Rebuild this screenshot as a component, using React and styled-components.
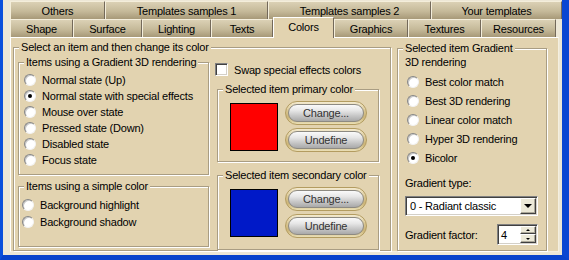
import React from 'react'
import styled, { createGlobalStyle } from 'styled-components'

const BEIGE = '#e2d3b0'

const GlobalStyle = createGlobalStyle`
  body {
    margin: 0;
    font-family: 'Liberation Sans', Arial, sans-serif;
    font-size: 11px;
    color: #000;
  }
`

const Window = styled.div`
  box-sizing: border-box;
  width: 569px;
  height: 260px;
  padding: 1px 0 0 7px;
  background: #ede7d6;
  border-left: 3px solid #0b50dc;
  border-right: 7px solid #0a46d2;
  border-bottom: 5px solid #0843cc;

  display: flex;
  flex-direction: column;
  letter-spacing: -0.2px;
`

const TabRow = styled.div`
  display: flex;
  align-items: flex-start;
  height: 18px;
`

const Tab = styled.div`
  box-sizing: border-box;
  width: ${p => p.$w}px;
  height: ${p => (p.$active ? 21 : 18)}px;
  margin-top: ${p => (p.$active ? -2 : 0)}px;
  padding-top: 2px;
  position: relative;
  z-index: ${p => (p.$active ? 1 : 0)};

  border-top: 1px solid ${p => (p.$active ? '#fff' : '#f4eedb')};
  border-left: 1px solid ${p => (p.$active ? '#fff' : '#f4eedb')};
  border-right: 1px solid #73695a;
  background: ${p =>
    p.$active ? BEIGE : 'linear-gradient(#dbd1b5, #c5b999 55%, #a79978)'};

  text-align: center;
  line-height: 14px;
  white-space: nowrap;
`

const Panel = styled.div`
  flex: 1;
  margin: 0 3px 3px 0;
  padding: 3px 0 0 2px;
  background: ${BEIGE};
  border: 1px solid #fff;
  border-right-color: #f4efe0;
  border-bottom-color: #f4efe0;

  display: flex;
  align-items: flex-start;
`

const Group = styled.fieldset`
  box-sizing: border-box;
  width: ${p => p.$w}px;
  height: ${p => p.$h}px;
  margin: ${p => p.$mt || 0}px 0 0 ${p => p.$ml || 0}px;
  padding: 0;
  min-width: 0;
  border: 1px solid #a99d83;
  box-shadow: 1px 1px 0 #fff, inset 1px 1px 0 #fff;
`

const Legend = styled.legend`
  margin-left: 5px;
  padding: 0 2px;
  line-height: 13px;
  background: ${BEIGE};
`

const SplitBody = styled.div`
  display: flex;
  padding: 2px 0 0 4px;
`

const Column = styled.div`
  display: flex;
  flex-direction: column;
  margin-left: ${p => p.$ml || 0}px;
`

const RadioList = styled.div`
  display: flex;
  flex-direction: column;
  padding: 3px 0 0 ${p => p.$pl}px;
`

const Row = styled.label`
  display: flex;
  align-items: center;
  gap: 6px;
  height: ${p => p.$h}px;
  white-space: nowrap;
`

const RadioDot = styled.span`
  box-sizing: border-box;
  width: 12px;
  height: 12px;
  border-radius: 50%;
  background: #fff;
  border: 1px solid;
  border-color: #858585 #f2f2f2 #f2f2f2 #858585;
  box-shadow: inset 1px 1px 0 #c8c8c8;

  display: flex;
  align-items: center;
  justify-content: center;

  &::after {
    content: '';
    width: 4px;
    height: 4px;
    border-radius: 50%;
    background: #000;
    display: ${p => (p.$on ? 'block' : 'none')};
  }
`

const CheckBox = styled.span`
  box-sizing: border-box;
  width: 13px;
  height: 13px;
  background: #fff;
  border: 1px solid;
  border-color: #808080 #fff #fff #808080;
  box-shadow: inset 1px 1px 0 #404040, inset -1px -1px 0 #d4d0c8;
`

const CheckRow = styled.label`
  display: flex;
  align-items: center;
  gap: 6px;
  height: 13px;
  margin-top: 7px;
`

const ColorBody = styled.div`
  display: flex;
  align-items: center;
  gap: 7px;
  padding: 5px 0 0 12px;
`

const Swatch = styled.div`
  box-sizing: border-box;
  width: 48px;
  height: 48px;
  border: 1px solid #000;
  background: ${p => p.$color};
`

const Buttons = styled.div`
  display: flex;
  flex-direction: column;
  gap: 3px;
`

const PillButton = styled.button`
  box-sizing: border-box;
  width: 82px;
  height: 24px;
  padding: 2px;
  border-radius: 12px;
  border: 1px solid #b39c60;
  background: linear-gradient(#f3ead0, #d6c28c 45%, #cbb478 70%, #eadfb6);
  display: flex;
  font: inherit;
  letter-spacing: inherit;
`

const PillFace = styled.span`
  flex: 1;
  border-radius: 10px;
  border: 1px solid #8d8a82;
  background: linear-gradient(#fafafa 0%, #e6e6e6 35%, #c4c4c4 70%, #a9a9a9 100%);
  color: #333;
  display: flex;
  align-items: center;
  justify-content: center;
`

const SideBody = styled.div`
  display: flex;
  flex-direction: column;
  padding-left: 7px;
`

const Caption = styled.div`
  line-height: 13px;
  margin-top: ${p => p.$mt || 0}px;
`

const Combo = styled.div`
  box-sizing: border-box;
  width: 133px;
  height: 20px;
  margin-top: 6px;
  padding: 0 1px 0 4px;
  background: #fff;
  border: 1px solid;
  border-color: #808080 #fff #fff #808080;
  box-shadow: inset 1px 1px 0 #404040, inset -1px -1px 0 #d4d0c8;
  display: flex;
  align-items: center;
  justify-content: space-between;
`

const ArrowButton = styled.span`
  box-sizing: border-box;
  width: 16px;
  height: ${p => p.$h}px;
  background: #ece9d8;
  border: 1px solid;
  border-color: #fff #404040 #404040 #fff;
  box-shadow: inset -1px -1px 0 #aca899;
  display: flex;
  align-items: center;
  justify-content: center;

  &::after {
    content: '';
    border-left: ${p => p.$size}px solid transparent;
    border-right: ${p => p.$size}px solid transparent;
    ${p => (p.$up ? 'border-bottom' : 'border-top')}: ${p => p.$size}px solid #000;
  }
`

const FactorRow = styled.div`
  display: flex;
  align-items: center;
  justify-content: space-between;
  width: 133px;
  margin-top: 8px;
`

const Spin = styled.div`
  box-sizing: border-box;
  width: 41px;
  height: 21px;
  padding: 0 1px 0 3px;
  background: #fff;
  border: 1px solid;
  border-color: #808080 #fff #fff #808080;
  box-shadow: inset 1px 1px 0 #404040, inset -1px -1px 0 #d4d0c8;
  display: flex;
  align-items: center;
  justify-content: space-between;
`

const SpinButtons = styled.div`
  display: flex;
  flex-direction: column;
`

const topTabs = [
  { label: 'Others', w: 95 },
  { label: 'Templates samples 1', w: 163 },
  { label: 'Templates samples 2', w: 163 },
  { label: 'Your templates', w: 131 }
]

const bottomTabs = [
  { label: 'Shape', w: 63 },
  { label: 'Surface', w: 69 },
  { label: 'Lighting', w: 69 },
  { label: 'Texts', w: 62 },
  { label: 'Colors', w: 61, active: true },
  { label: 'Graphics', w: 74 },
  { label: 'Textures', w: 73 },
  { label: 'Resources', w: 75 }
]

const gradientItems = [
  'Normal state (Up)',
  'Normal state with special effects',
  'Mouse over state',
  'Pressed state (Down)',
  'Disabled state',
  'Focus state'
]

const renderModes = [
  'Best color match',
  'Best 3D rendering',
  'Linear color match',
  'Hyper 3D rendering',
  'Bicolor'
]

const Radio = ({ label, on, h }) => (
  <Row $h={h}>
    <RadioDot $on={on} />
    {label}
  </Row>
)

const ColorGroup = ({ title, color, h, mt }) => (
  <Group $w={162} $h={h} $mt={mt} $ml={2}>
    <Legend>{title}</Legend>
    <ColorBody>
      <Swatch $color={color} />
      <Buttons>
        <PillButton>
          <PillFace>Change...</PillFace>
        </PillButton>
        <PillButton>
          <PillFace>Undefine</PillFace>
        </PillButton>
      </Buttons>
    </ColorBody>
  </Group>
)

const App = () => (
  <>
    <GlobalStyle />
    <Window>
      <TabRow>
        {topTabs.map(t => (
          <Tab key={t.label} $w={t.w}>
            {t.label}
          </Tab>
        ))}
      </TabRow>
      <TabRow>
        {bottomTabs.map(t => (
          <Tab key={t.label} $w={t.w} $active={t.active}>
            {t.label}
          </Tab>
        ))}
      </TabRow>

      <Panel>
        <Group $w={378} $h={210}>
          <Legend>Select an item and then change its color</Legend>
          <SplitBody>
            <Column>
              <Group $w={191} $h={119}>
                <Legend>Items using a Gradient 3D rendering</Legend>
                <RadioList $pl={5}>
                  {gradientItems.map((label, i) => (
                    <Radio key={label} label={label} on={i === 1} h={16} />
                  ))}
                </RadioList>
              </Group>
              <Group $w={191} $h={67} $mt={5}>
                <Legend>Items using a simple color</Legend>
                <RadioList $pl={3}>
                  <Radio label='Background highlight' h={17} />
                  <Radio label='Background shadow' h={17} />
                </RadioList>
              </Group>
            </Column>

            <Column $ml={6}>
              <CheckRow>
                <CheckBox />
                Swap special effects colors
              </CheckRow>
              <ColorGroup title='Selected item primary color' color='#ff0000' h={79} mt={7} />
              <ColorGroup title='Selected item secondary color' color='#0019c8' h={81} mt={7} />
            </Column>
          </SplitBody>
        </Group>

        <Group $w={150} $h={209} $mt={1} $ml={6}>
          <Legend>Selected item Gradient</Legend>
          <SideBody>
            <Caption $mt={1}>3D rendering</Caption>
            <RadioList $pl={2}>
              {renderModes.map((label, i) => (
                <Radio key={label} label={label} on={i === 4} h={19} />
              ))}
            </RadioList>
            <Caption $mt={10}>Gradient type:</Caption>
            <Combo>
              0 - Radiant classic
              <ArrowButton $h={16} $size={4} />
            </Combo>
            <FactorRow>
              Gradient factor:
              <Spin>
                4
                <SpinButtons>
                  <ArrowButton $h={8} $size={2} $up />
                  <ArrowButton $h={9} $size={2} />
                </SpinButtons>
              </Spin>
            </FactorRow>
          </SideBody>
        </Group>
      </Panel>
    </Window>
  </>
)

export default App
